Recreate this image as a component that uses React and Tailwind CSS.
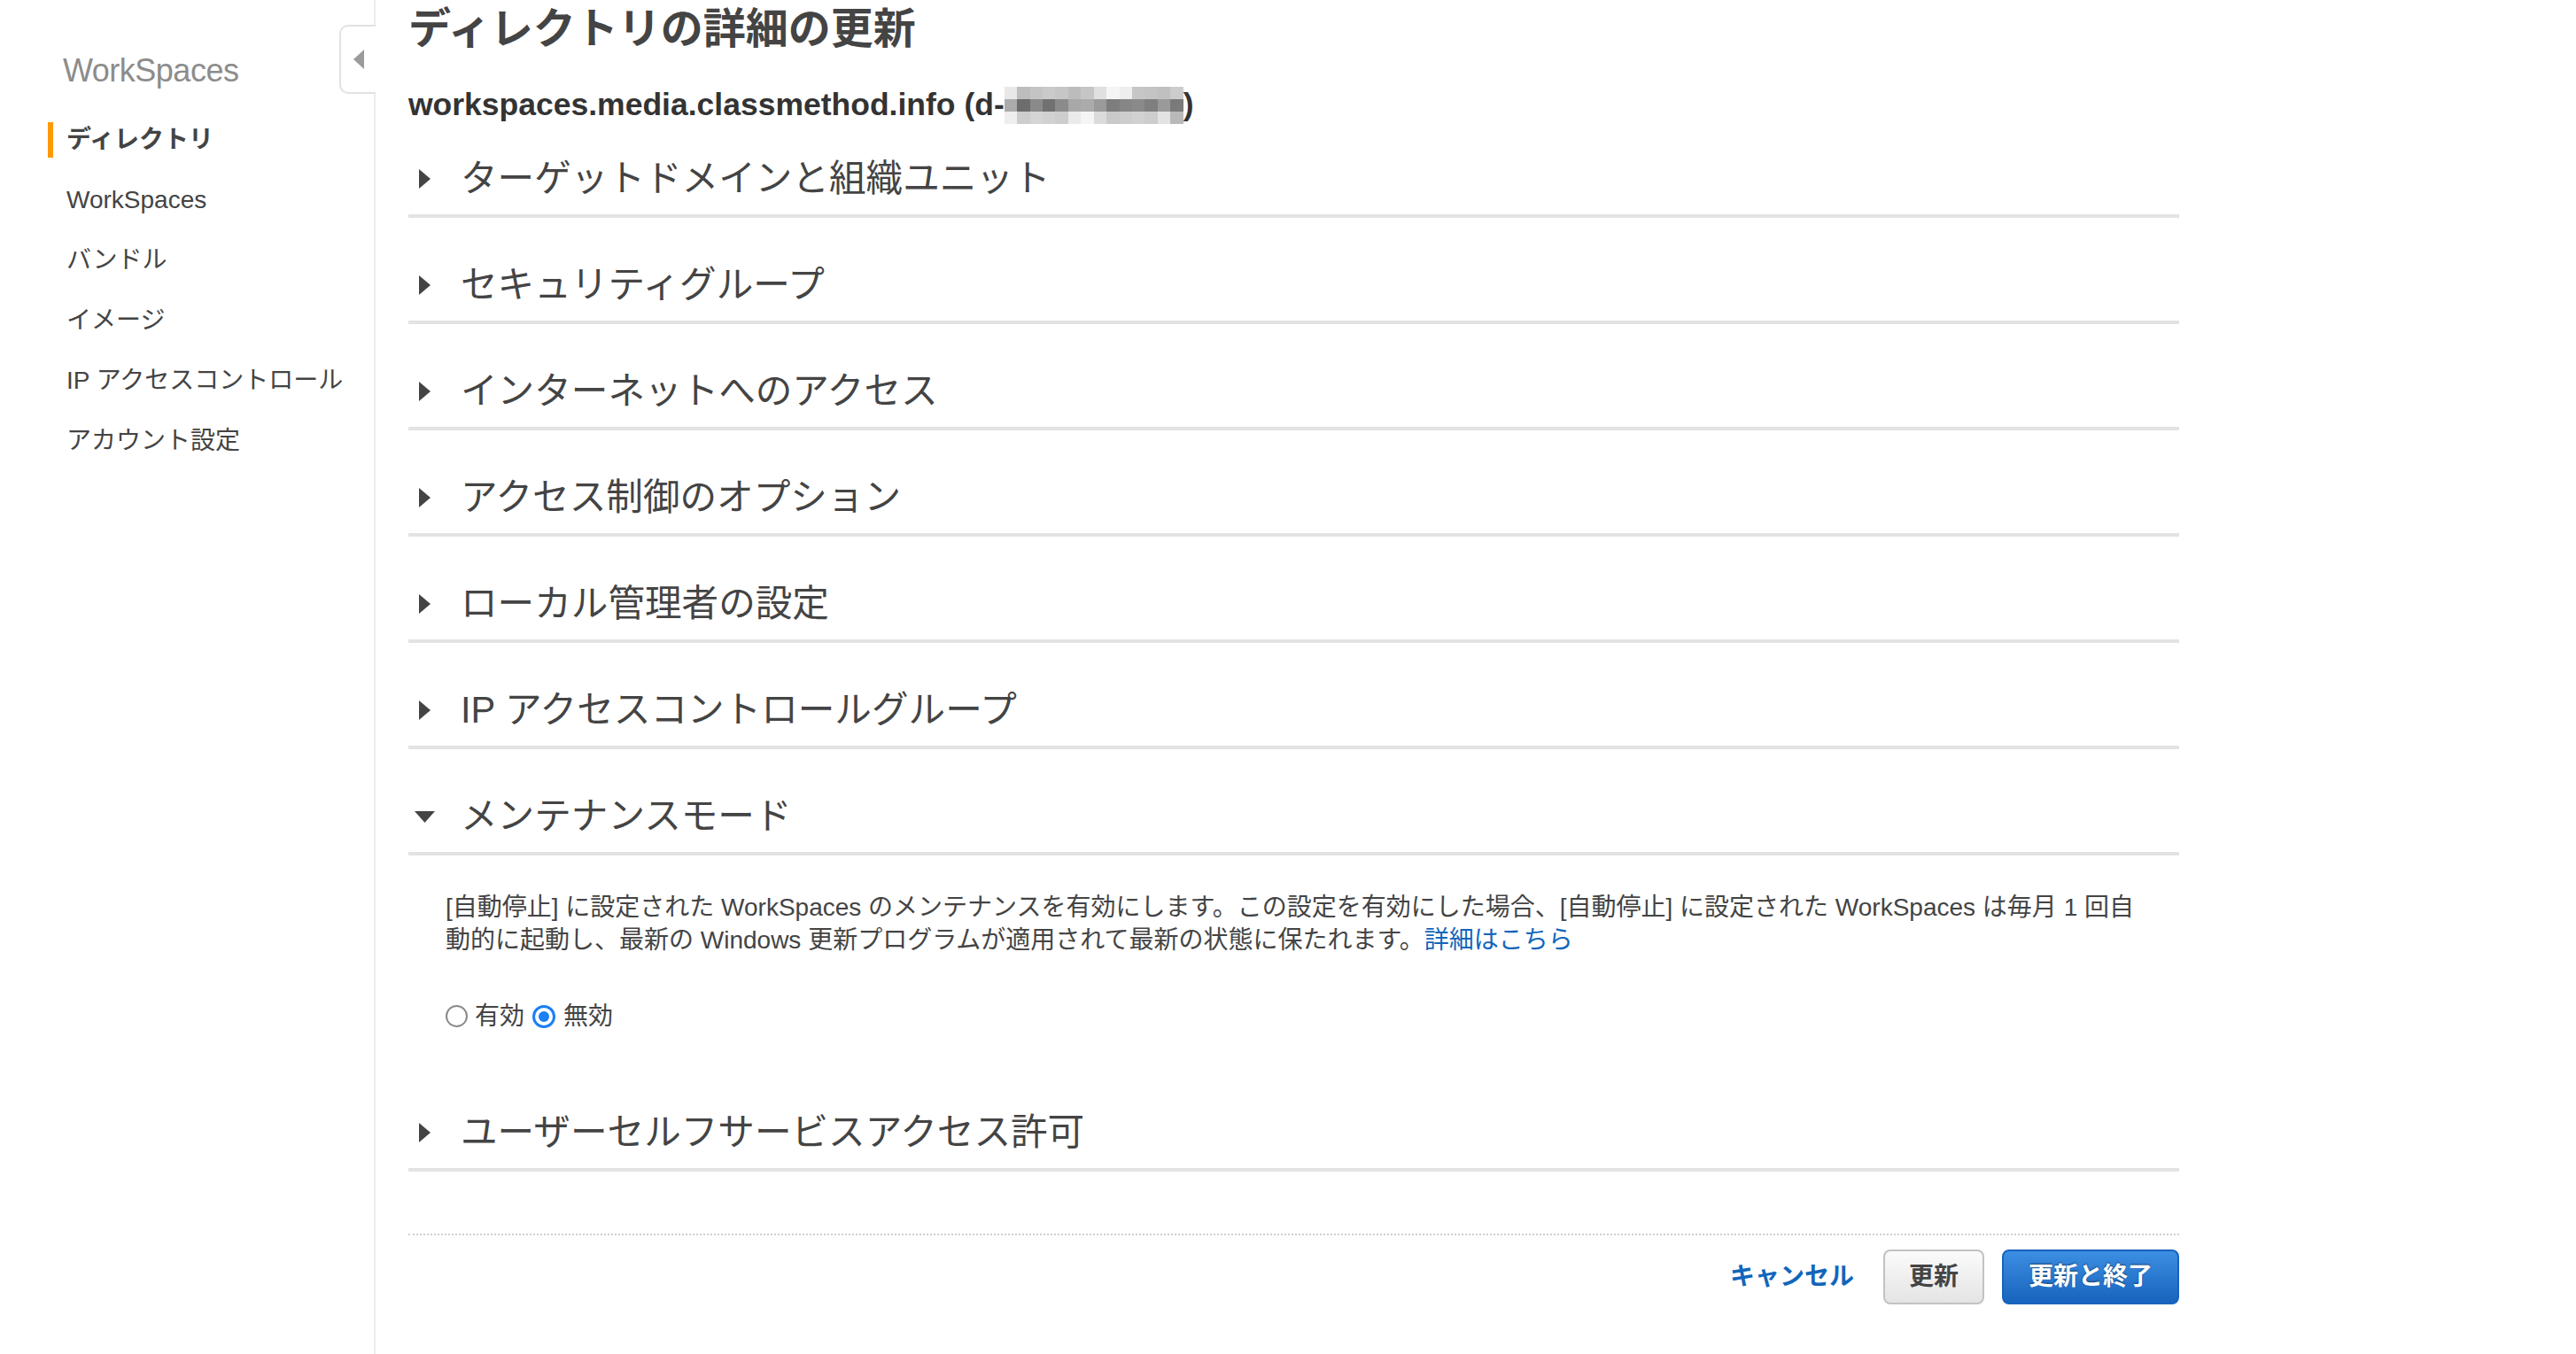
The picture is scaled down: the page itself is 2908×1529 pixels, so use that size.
import React from 'react';

const navItems = [
  { label: 'ディレクトリ', active: true },
  { label: 'WorkSpaces' },
  { label: 'バンドル' },
  { label: 'イメージ' },
  { label: 'IP アクセスコントロール' },
  { label: 'アカウント設定' },
];

const sections = [
  'ターゲットドメインと組織ユニット',
  'セキュリティグループ',
  'インターネットへのアクセス',
  'アクセス制御のオプション',
  'ローカル管理者の設定',
  'IP アクセスコントロールグループ',
];

// pixelated id, 3 rows of 14 blocks
const blur = [
  ['#e8e8e8', '#bdbdbd', '#c4c4c4', '#cacaca', '#c6c6c6', '#bcbcbc', '#c6c6c6', '#e0e0e0', '#f5f5f5', '#eeeeee', '#c6c6c6', '#c4c4c4', '#c0c0c0', '#cccccc'],
  ['#ababab', '#6d6d6d', '#8a8a8a', '#717171', '#8b8b8b', '#a8a8a8', '#ababab', '#9a9a9a', '#7d7d7d', '#868686', '#8a8a8a', '#7f7f7f', '#9a9a9a', '#7a7a7a'],
  ['#eeeeee', '#cdcdcd', '#d5d5d5', '#d1d1d1', '#cdcdcd', '#eaeaea', '#f5f5f5', '#dbdbdb', '#c9c9c9', '#cdcdcd', '#d1d1d1', '#cdcdcd', '#e3e3e3', '#b9b9b9'],
];

function Caret({ open }) {
  return (
    <span className="w-[25px] ml-[6px] mr-[28px] flex items-center justify-center shrink-0">
      {open ? (
        <svg width="23" height="13" viewBox="0 0 23 13">
          <path d="M0 0H23L11.5 13Z" fill="#444444" />
        </svg>
      ) : (
        <svg width="13" height="22" viewBox="0 0 13 22">
          <path d="M0 0L13 11L0 22Z" fill="#444444" />
        </svg>
      )}
    </span>
  );
}

function SectionHeader({ title, open }) {
  return (
    <div className="pb-[10px] border-b-4 border-[#e3e3e3]">
      <div className="h-[60px] flex items-center text-[41.6px] leading-none text-[#444444]">
        <Caret open={open} />
        <span>{title}</span>
      </div>
    </div>
  );
}

export default function App() {
  return (
    <div className="flex min-h-[1529px] bg-white font-['Liberation_Sans','Noto_Sans_CJK_JP',sans-serif] text-[#444444]">
      {/* Sidebar */}
      <aside className="relative w-[424px] shrink-0 border-r-2 border-[#ececec] pt-[52px]">
        <div className="pl-[71px] h-[56px] flex items-center text-[36px] text-[#8c8c8c] tracking-[-0.5px]">
          WorkSpaces
        </div>
        <ul className="mt-[16px] pl-[54px]">
          {navItems.map((item) => (
            <li key={item.label} className="h-[68px] flex items-center">
              <span
                className={
                  item.active
                    ? 'h-[40px] flex items-center border-l-[6px] border-[#ff9900] pl-[15px] text-[28px] font-bold text-[#444444]'
                    : 'h-[40px] flex items-center border-l-[6px] border-transparent pl-[15px] text-[28px] text-[#444444]'
                }
              >
                {item.label}
              </span>
            </li>
          ))}
        </ul>
        <div className="absolute right-[-2px] top-[28px] w-[41px] h-[78px] bg-white border-2 border-r-0 border-[#e2e2e2] rounded-l-[10px] flex items-center justify-center">
          <svg width="12" height="22" viewBox="0 0 12 22">
            <path d="M12 0L0 11L12 22Z" fill="#9b9b9b" />
          </svg>
        </div>
      </aside>

      {/* Main */}
      <main className="pl-[37px]">
        <div className="w-[1999px]">
          <h1 className="h-[66px] flex items-center text-[48px] font-bold leading-none text-[#444444]">
            ディレクトリの詳細の更新
          </h1>
          <div className="h-[106px] flex items-center text-[35.5px] font-bold leading-none text-[#333333]">
            <span>workspaces.media.classmethod.info (d-</span>
            <span className="inline-grid grid-cols-[repeat(14,1fr)] w-[202px] h-[42px]">
              {blur.flatMap((row, r) =>
                row.map((c, i) => <span key={r + '-' + i} style={{ backgroundColor: c }} />)
              )}
            </span>
            <span>)</span>
          </div>

          <div className="flex flex-col gap-[46px]">
            {sections.map((s) => (
              <SectionHeader key={s} title={s} />
            ))}
            <div>
              <SectionHeader title="メンテナンスモード" open />
              <div className="pl-[42px] pt-[40px] pb-[37px] text-[28px] text-[#444444]">
                <p className="leading-[37px]">
                  [自動停止] に設定された WorkSpaces のメンテナンスを有効にします。この設定を有効にした場合、[自動停止] に設定された WorkSpaces は毎月 1 回自
                  <br />
                  動的に起動し、最新の Windows 更新プログラムが適用されて最新の状態に保たれます。
                  <a className="text-[#1166bb]">詳細はこちら</a>
                </p>
                <div className="mt-[49px] h-[37px] flex items-center">
                  <span className="w-[25px] h-[25px] rounded-full border-2 border-[#8a8a8a] bg-white" />
                  <span className="ml-[8px] w-[56px] leading-none">有効</span>
                  <span className="ml-[9px] w-[26px] h-[26px] rounded-full border-[3px] border-[#1a7ff5] flex items-center justify-center">
                    <span className="w-[12px] h-[12px] rounded-full bg-[#1a7ff5]" />
                  </span>
                  <span className="ml-[9px] leading-none">無効</span>
                </div>
              </div>
            </div>
            <SectionHeader title="ユーザーセルフサービスアクセス許可" />
          </div>

          <div className="mt-[70px] border-t-2 border-dotted border-[#cfcfcf]" />
          <div className="mt-[16px] flex items-center justify-end text-[28px] font-bold">
            <a className="text-[#1166bb] mr-[33px]">キャンセル</a>
            <button className="h-[62px] px-[27px] rounded-[8px] border-2 border-[#c2c2c2] bg-linear-to-b from-[#fbfbfb] to-[#e4e4e4] text-[#444444] leading-none">
              更新
            </button>
            <button className="ml-[20px] h-[62px] px-[28px] rounded-[8px] border-2 border-[#1763bd] bg-linear-to-b from-[#3c8fe3] to-[#1763bd] text-white leading-none [text-shadow:0_-1px_2px_rgba(0,0,0,0.45)]">
              更新と終了
            </button>
          </div>
        </div>
      </main>
    </div>
  );
}
